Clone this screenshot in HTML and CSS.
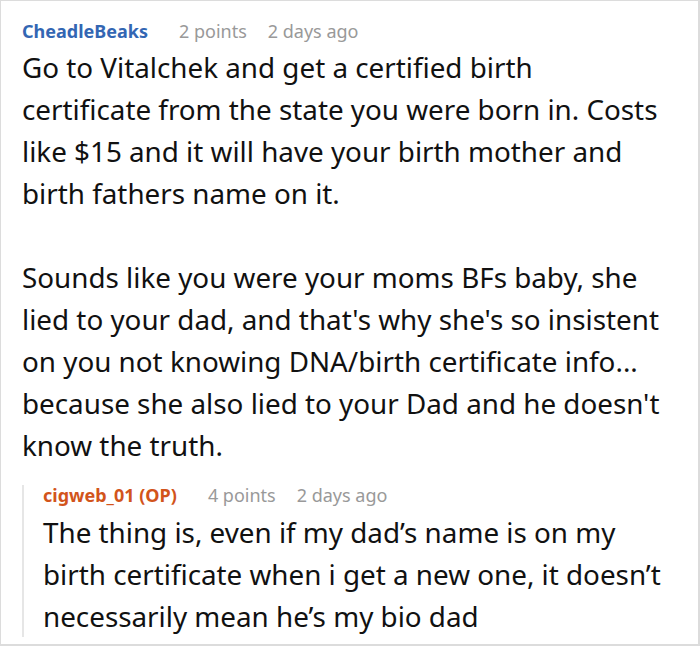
FILE: index.html
```html
<!DOCTYPE html>
<html>
<head>
<meta charset="utf-8">
<link rel="stylesheet" href="styles.css">
</head>
<body>
<div class="thread">
  <div class="comment">
    <div class="meta">
      <span class="author">CheadleBeaks</span>
      <span class="info">2 points</span>
      <span class="info">2 days ago</span>
    </div>
    <div class="body">
      <p>Go to Vitalchek and get a certified birth certificate from the state you were born in. Costs like $15 and it will have your birth mother and birth fathers name on it.</p>
      <p>Sounds like you were your moms BFs baby, she lied to your dad, and that's why she's so insistent on you not knowing DNA/birth certificate info... because she also lied to your Dad and he doesn't know the truth.</p>
    </div>
    <div class="reply">
      <div class="meta">
        <span class="author op">cigweb_01 (OP)</span>
        <span class="info">4 points</span>
        <span class="info">2 days ago</span>
      </div>
      <div class="body">
        <p>The thing is, even if my dad’s name is on my birth certificate when i get a new one, it doesn’t necessarily mean he’s my bio dad</p>
      </div>
    </div>
  </div>
</div>
</body>
</html>
```

FILE: styles.css
```css
html, body {
  margin: 0;
  padding: 0;
  background: #fff;
}
.thread {
  box-sizing: border-box;
  width: 700px;
  height: 646px;
  border: 1px solid #dcdcdc;
  border-right-width: 2px;
  border-bottom-width: 2px;
  padding: 16px 30px 0 21px;
  font-family: "Noto Sans", sans-serif;
  color: #111;
  overflow: hidden;
}
.meta {
  display: flex;
  gap: 21px;
  align-items: baseline;
  font-size: 18px;
  line-height: 28px;
}
.author {
  font-weight: 700;
  color: #3366b3;
  margin-right: 10px;
}
.author.op {
  color: #d2541b;
}
.info {
  color: #999;
}
.body {
  font-size: 27.8px;
  line-height: 42px;
  margin-top: 1px;
}
.body p {
  margin: 0 0 42px 0;
}
.body p:last-child {
  margin-bottom: 0;
}
.reply {
  margin-top: 19px;
  border-left: 2px solid #e6e6e6;
  padding-left: 19px;
}
.reply .meta {
  line-height: 20px;
}
.reply .body {
  margin-top: 6px;
}
```
